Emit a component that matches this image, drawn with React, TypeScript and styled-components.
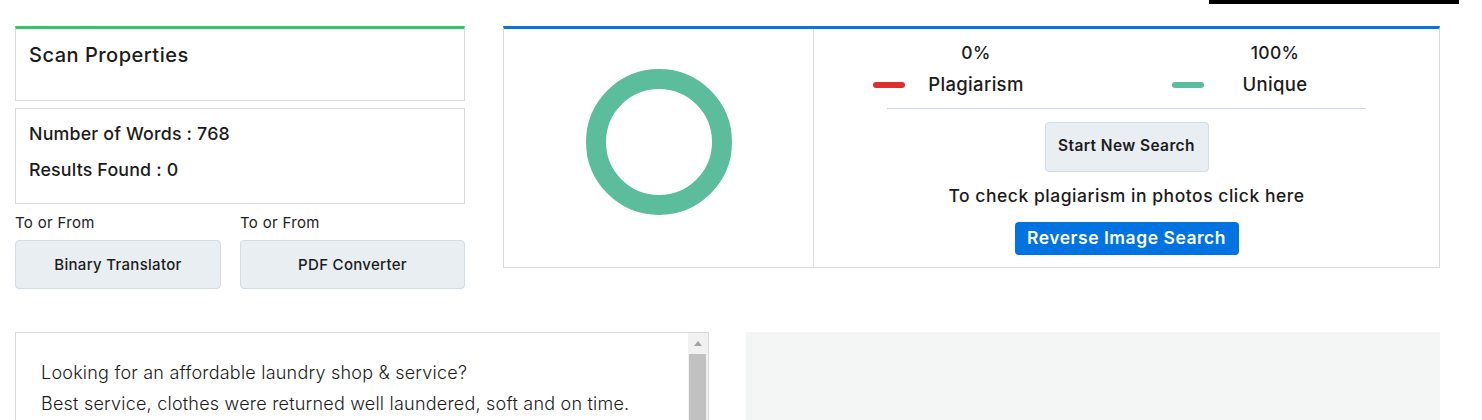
import { ReactElement } from 'react'
import styled, { createGlobalStyle } from 'styled-components'

const GlobalStyle = createGlobalStyle`
  html, body {
    margin: 0;
    padding: 0;
    overflow: hidden;
    background: #ffffff;
  }
  body {
    font-family: Inter, "Noto Sans", sans-serif;
    color: #1b1b1b;
    letter-spacing: 0.02em;
  }
  * {
    box-sizing: border-box;
  }
`

const Page = styled.div`
  width: 1482px;
  padding: 0 42px 0 15px;
`

const TopBar = styled.div`
  display: flex;
  justify-content: flex-end;
  margin-right: -19px;
  > div {
    width: 250px;
    height: 4px;
    background: #000;
  }
`

const TopRow = styled.div`
  display: grid;
  grid-template-columns: 450px 1fr;
  gap: 38px;
  margin-top: 22px;
  align-items: start;
`

const Card = styled.div<{ $accent?: string; $height: number }>`
  border: 1px solid #d9d9d9;
  border-top: ${(props) => (props.$accent ? `3px solid ${props.$accent}` : '1px solid #d9d9d9')};
  height: ${(props) => props.$height}px;
  background: #fff;
`

const TitleCard = styled(Card)`
  padding: 13px 13px;
  .title {
    font-size: 20px;
    line-height: 26px;
    font-weight: 500;
    letter-spacing: 0.025em;
  }
`

const StatsCard = styled(Card)`
  margin-top: 7px;
  padding: 7px 13px;
  > div {
    font-size: 17.8px;
    line-height: 36px;
    font-weight: 500;
    letter-spacing: 0.01em;
  }
`

const ToolRow = styled.div`
  display: grid;
  grid-template-columns: 206px 1fr;
  gap: 19px;
  margin-top: 8px;
`

const ToolLabel = styled.div`
  font-size: 15px;
  line-height: 20px;
  margin-top: 1px;
  margin-bottom: 7px;
  color: #222;
`

const GreyButton = styled.button<{ $height: number }>`
  display: flex;
  align-items: center;
  justify-content: center;
  width: 100%;
  height: ${(props) => props.$height}px;
  background: #e9eef3;
  border: 1px solid #d3dbe4;
  border-radius: 4px;
  font-family: inherit;
  font-size: 15px;
  font-weight: 500;
  letter-spacing: 0.02em;
  color: #1b1b1b;
  padding: 0 6px;
  white-space: nowrap;
`

const ResultCard = styled.div`
  display: grid;
  grid-template-columns: 310px 1fr;
  height: 242px;
  border: 1px solid #d9d9d9;
  border-top: 3px solid #0a74dc;
`

const ChartCell = styled.div`
  border-right: 1px solid #dde3ec;
  display: flex;
  justify-content: center;
  padding-top: 40px;
`

const SummaryCell = styled.div`
  display: flex;
  flex-direction: column;
  align-items: center;
  padding-top: 13px;
`

const Legend = styled.div`
  display: grid;
  grid-template-columns: 299px 174px;
  align-self: flex-start;
  margin-left: 59px;
`

const LegendItem = styled.div`
  display: grid;
  grid-template-columns: 32px 142px;
  grid-template-rows: 22px 22px;
  row-gap: 9px;
  .percent {
    grid-column: 2;
    grid-row: 1;
    text-align: center;
    font-size: 17.5px;
    line-height: 22px;
    font-weight: 500;
  }
  .label {
    grid-column: 2;
    grid-row: 2;
    text-align: center;
    font-size: 18.5px;
    line-height: 22px;
    font-weight: 500;
  }
`

const Swatch = styled.span<{ $color: string }>`
  grid-column: 1;
  grid-row: 2;
  align-self: center;
  margin-top: 2px;
  height: 6px;
  border-radius: 3px;
  background: ${(props) => props.$color};
`

const Divider = styled.div`
  width: 479px;
  height: 1px;
  background: #ccd6e0;
  margin-top: 13px;
`

const StartButton = styled(GreyButton)`
  width: 164px;
  margin-top: 13px;
  padding-bottom: 3px;
  font-weight: 600;
  font-size: 15.5px;
  letter-spacing: 0.025em;
`

const PhotoHint = styled.div`
  margin-top: 12px;
  font-size: 17.5px;
  line-height: 24px;
  font-weight: 500;
  letter-spacing: 0.03em;
`

const BlueButton = styled.button`
  margin-top: 14px;
  width: 224px;
  height: 33px;
  border: none;
  border-radius: 4px;
  background: #0073e0;
  color: #fff;
  font-family: inherit;
  font-size: 17.5px;
  font-weight: 600;
  letter-spacing: 0.03em;
  padding-bottom: 3px;
`

const BottomRow = styled.div`
  display: grid;
  grid-template-columns: 1fr 1fr;
  gap: 37px;
  margin-top: 43px;
`

const TextBox = styled.div`
  display: flex;
  height: 320px;
  border: 1px solid #d9d9d9;
`

const TextContent = styled.div`
  flex: 1;
  padding: 24px 25px;
  font-size: 18px;
  line-height: 31px;
  font-weight: 300;
  letter-spacing: 0.012em;
  color: #1b1b1b;
`

const ScrollBar = styled.div`
  width: 20px;
  background: #f1f1f1;
  display: flex;
  flex-direction: column;
`

const ScrollArrow = styled.div`
  height: 21px;
  display: flex;
  align-items: center;
  justify-content: center;
  &::after {
    content: '';
    border-left: 4px solid transparent;
    border-right: 4px solid transparent;
    border-bottom: 5px solid #a3a3a3;
  }
`

const ScrollThumb = styled.div`
  flex: 1;
  margin: 0 2px 0 1px;
  background: #c1c1c1;
`

const AdPanel = styled.div`
  height: 320px;
  background: #f4f5f5;
`

function Donut(): ReactElement {
  return (
    <svg width="146" height="146" viewBox="0 0 146 146">
      <circle cx="73" cy="73" r="63" fill="none" stroke="#5bbd9c" strokeWidth="20" />
    </svg>
  )
}

export default function App(): ReactElement {
  return (
    <Page>
      <GlobalStyle />
      <TopBar>
        <div />
      </TopBar>
      <TopRow>
        <div>
          <TitleCard $accent="#33c56f" $height={75}>
            <div className="title">Scan Properties</div>
          </TitleCard>
          <StatsCard $height={96}>
            <div>Number of Words : 768</div>
            <div>Results Found : 0</div>
          </StatsCard>
          <ToolRow>
            <div>
              <ToolLabel>To or From</ToolLabel>
              <GreyButton $height={49}>Binary Translator</GreyButton>
            </div>
            <div>
              <ToolLabel>To or From</ToolLabel>
              <GreyButton $height={49}>PDF Converter</GreyButton>
            </div>
          </ToolRow>
        </div>
        <ResultCard>
          <ChartCell>
            <Donut />
          </ChartCell>
          <SummaryCell>
            <Legend>
              <LegendItem>
                <div className="percent">0%</div>
                <Swatch $color="#dc2f2f" />
                <div className="label">Plagiarism</div>
              </LegendItem>
              <LegendItem>
                <div className="percent">100%</div>
                <Swatch $color="#5bbd9c" />
                <div className="label">Unique</div>
              </LegendItem>
            </Legend>
            <Divider />
            <StartButton $height={50}>Start New Search</StartButton>
            <PhotoHint>To check plagiarism in photos click here</PhotoHint>
            <BlueButton>Reverse Image Search</BlueButton>
          </SummaryCell>
        </ResultCard>
      </TopRow>
      <BottomRow>
        <TextBox>
          <TextContent>
            <div>Looking for an affordable laundry shop &amp; service?</div>
            <div>Best service, clothes were returned well laundered, soft and on time.</div>
          </TextContent>
          <ScrollBar>
            <ScrollArrow />
            <ScrollThumb />
          </ScrollBar>
        </TextBox>
        <AdPanel />
      </BottomRow>
    </Page>
  )
}
